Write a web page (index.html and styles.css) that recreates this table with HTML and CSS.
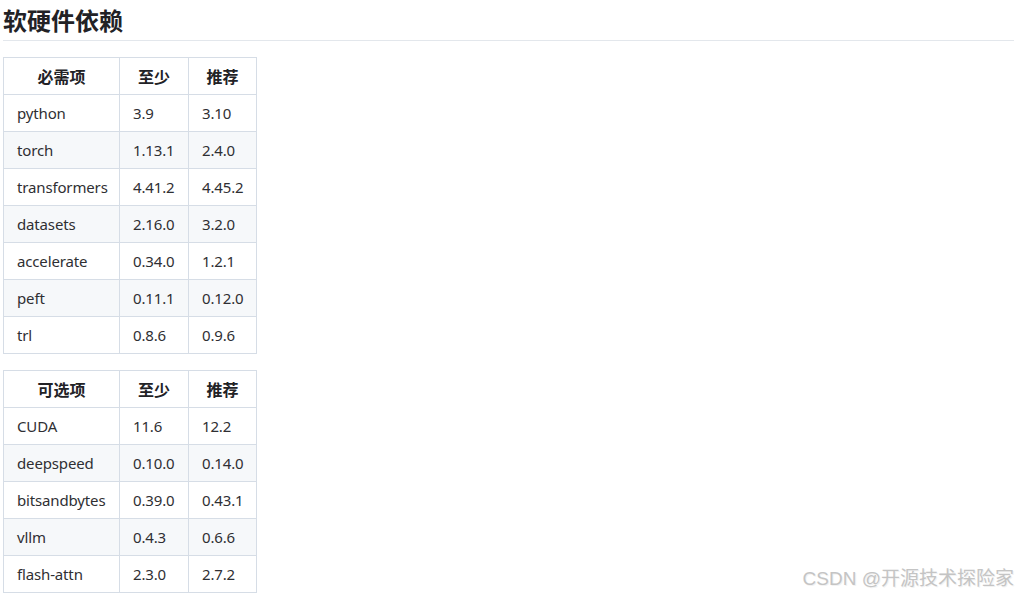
FILE: index.html
```html
<!DOCTYPE html>
<html lang="zh">
<head>
<meta charset="utf-8">
<title>软硬件依赖</title>
<link rel="stylesheet" href="styles.css">
</head>
<body>
<main class="doc">
  <h2 class="title">软硬件依赖</h2>
  <table class="deps">
    <colgroup><col class="c1"><col class="c2"><col class="c3"></colgroup>
    <thead><tr><th>必需项</th><th>至少</th><th>推荐</th></tr></thead>
    <tbody>
      <tr><td>python</td><td>3.9</td><td>3.10</td></tr>
      <tr><td>torch</td><td>1.13.1</td><td>2.4.0</td></tr>
      <tr><td>transformers</td><td>4.41.2</td><td>4.45.2</td></tr>
      <tr><td>datasets</td><td>2.16.0</td><td>3.2.0</td></tr>
      <tr><td>accelerate</td><td>0.34.0</td><td>1.2.1</td></tr>
      <tr><td>peft</td><td>0.11.1</td><td>0.12.0</td></tr>
      <tr><td>trl</td><td>0.8.6</td><td>0.9.6</td></tr>
    </tbody>
  </table>
  <table class="deps">
    <colgroup><col class="c1"><col class="c2"><col class="c3"></colgroup>
    <thead><tr><th>可选项</th><th>至少</th><th>推荐</th></tr></thead>
    <tbody>
      <tr><td>CUDA</td><td>11.6</td><td>12.2</td></tr>
      <tr><td>deepspeed</td><td>0.10.0</td><td>0.14.0</td></tr>
      <tr><td>bitsandbytes</td><td>0.39.0</td><td>0.43.1</td></tr>
      <tr><td>vllm</td><td>0.4.3</td><td>0.6.6</td></tr>
      <tr><td>flash-attn</td><td>2.3.0</td><td>2.7.2</td></tr>
    </tbody>
  </table>
</main>
<div class="watermark">CSDN @开源技术探险家</div>
</body>
</html>
```

FILE: styles.css
```css
html, body {
  margin: 0;
  padding: 0;
  background: #fff;
}
body {
  font-family: "Noto Sans", "Noto Sans CJK SC", sans-serif;
  color: #333;
  position: relative;
  width: 1018px;
  height: 598px;
  overflow: hidden;
}
.doc {
  padding: 0 4px 0 3px;
}
.title {
  margin: 0;
  padding-top: 4px;
  padding-bottom: 4px;
  font-size: 24px;
  line-height: 32px;
  font-weight: 700;
  color: #222226;
  border-bottom: 1px solid #e3e7ec;
  font-family: "Noto Sans CJK SC", sans-serif;
}
.deps {
  border-collapse: collapse;
  table-layout: fixed;
  width: 254px;
  margin-top: 16px;
  font-size: 15px;
}
.deps + .deps {
  margin-top: 16px;
}
.c1 { width: 116px; }
.c2 { width: 69px; }
.c3 { width: 68px; }
.deps th, .deps td {
  border: 1px solid #d6dde6;
  padding: 8px 13px;
  line-height: 20px;
  height: 20px;
  white-space: nowrap;
}
.deps th {
  font-family: "Noto Sans CJK SC", sans-serif;
  font-size: 16px;
  font-weight: 700;
  text-align: center;
  color: #222226;
  background: #fff;
}
.deps td {
  text-align: left;
  color: #2f2f33;
  letter-spacing: -0.15px;
}
.deps tbody tr:nth-child(odd) td {
  background: #fff;
}
.deps tbody tr:nth-child(even) td {
  background: #f6f8fa;
}
.watermark {
  position: absolute;
  right: 4px;
  bottom: 8px;
  font-family: "Liberation Sans", "Noto Sans CJK SC", sans-serif;
  font-size: 19px;
  line-height: 22px;
  color: #c4c4c4;
  text-shadow: 1px 1px 0 #f2f2f2;
}
```
